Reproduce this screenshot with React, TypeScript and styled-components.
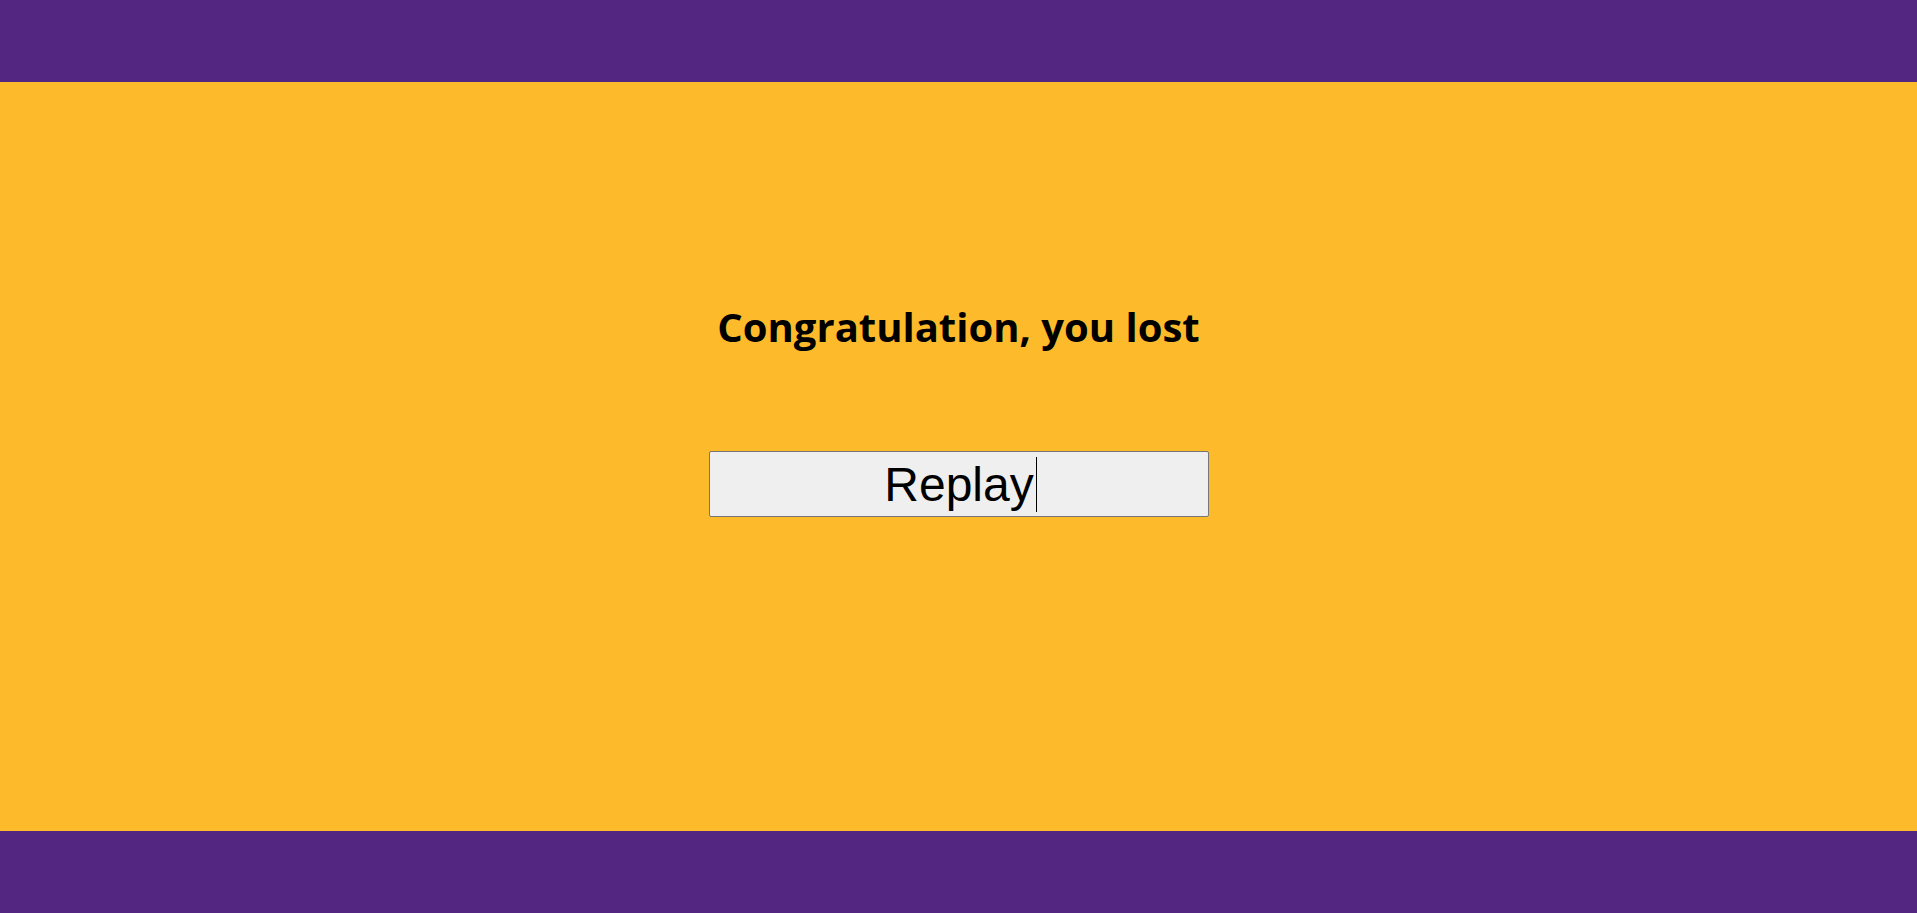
import React from "react";
import styled, { createGlobalStyle } from "styled-components";

const GlobalStyle = createGlobalStyle`
  html, body {
    margin: 0;
    padding: 0;
    height: 100%;
  }
  body {
    font-family: "Open Sans", "Liberation Sans", sans-serif;
  }
  #root {
    height: 100%;
  }
`;

const Page = styled.div`
  display: flex;
  flex-direction: column;
  height: 913px;
  width: 100%;
`;

const Bar = styled.div`
  height: 82px;
  flex: 0 0 82px;
  background: #532682;
`;

const Main = styled.main`
  flex: 1;
  background: #fdba2a;
  display: flex;
  flex-direction: column;
  align-items: center;
  padding-top: 217px;
  box-sizing: border-box;
`;

const Title = styled.h1`
  margin: 0;
  font-family: "Open Sans", sans-serif;
  font-weight: 700;
  font-size: 40px;
  line-height: 55px;
  color: #000;
`;

const ReplayButton = styled.button`
  position: relative;
  margin-top: 97px;
  margin-left: 1px;
  width: 500px;
  height: 66px;
  background: #efefef;
  border: 1px solid #767676;
  border-radius: 2px;
  font-family: "Liberation Sans", Arial, sans-serif;
  font-size: 48px;
  color: #000;
  padding: 0;
  display: flex;
  align-items: center;
  justify-content: center;
  cursor: text;
`;

const Caret = styled.span`
  position: absolute;
  left: 326px;
  top: 5px;
  width: 1px;
  height: 55px;
  background: #000;
`;

export default function App() {
  return (
    <>
      <GlobalStyle />
      <Page>
        <Bar />
        <Main>
          <Title>Congratulation, you lost</Title>
          <ReplayButton>
            Replay
            <Caret />
          </ReplayButton>
        </Main>
        <Bar />
      </Page>
    </>
  );
}
